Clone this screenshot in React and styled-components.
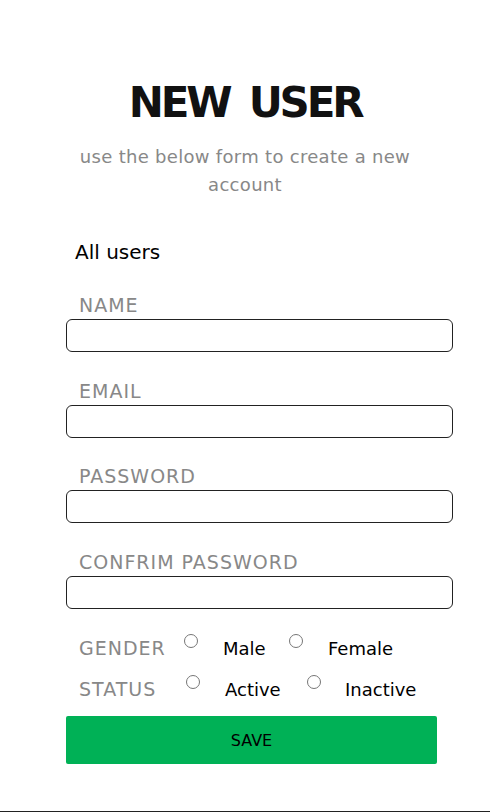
import React from "react";
import styled, { createGlobalStyle } from "styled-components";

const GlobalStyle = createGlobalStyle`
  body {
    margin: 0;
    font-family: "Comic Sans MS", "DejaVu Sans", sans-serif;
    background: #fff;
  }
`;

const Page = styled.div`
  height: 811px;
  border-bottom: 1px solid #222;
  box-sizing: content-box;
  display: flex;
  flex-direction: column;
  align-items: center;
`;

const Header = styled.div`
  padding-top: 77px;
  width: 100%;
  text-align: center;
`;

const Title = styled.h1`
  margin: 0;
  font-size: 42px;
  line-height: 52px;
  font-weight: bold;
  color: #111;
  letter-spacing: -3.2px;
  word-spacing: 8px;
`;

const Subtitle = styled.p`
  margin: 14px auto 0;
  width: 350px;
  font-size: 18px;
  line-height: 28px;
  letter-spacing: 0.3px;
  color: #888;
`;

const Form = styled.form`
  width: 387px;
  margin-left: 66px;
  align-self: flex-start;
  display: flex;
  flex-direction: column;
`;

const UsersLink = styled.div`
  margin-top: 41px;
  margin-left: 9px;
  font-size: 20px;
  line-height: 24px;
  color: #000;
`;

const Field = styled.div`
  margin-top: ${(p) => p.$top}px;
  display: flex;
  flex-direction: column;
  gap: 2px;
`;

const Label = styled.label`
  padding-left: 13px;
  font-size: 19px;
  line-height: 24px;
  letter-spacing: 1px;
  color: #888;
`;

const Input = styled.input`
  height: 33px;
  box-sizing: border-box;
  border: 1px solid #222;
  border-radius: 6px;
  outline: none;
`;

const ChoiceRow = styled.div`
  margin-top: ${(p) => p.$top}px;
  padding-left: 13px;
  display: flex;
  align-items: center;
  height: 24px;
  font-size: 18px;
`;

const RowLabel = styled.span`
  color: #888;
  font-size: 19px;
  letter-spacing: 1px;
  width: ${(p) => p.$w}px;
`;

const Radio = styled.input.attrs({ type: "radio" })`
  margin: 0;
  width: 14px;
  height: 14px;
  align-self: flex-start;
  margin-top: -2px;
`;

const Choice = styled.span`
  color: #000;
  margin-left: ${(p) => p.$ml}px;
  width: ${(p) => p.$w}px;
`;

const SaveButton = styled.button`
  margin-top: 15px;
  width: 371px;
  height: 48px;
  flex-shrink: 0;
  border: none;
  border-radius: 2px;
  background: #00b156;
  color: #000;
  font-family: inherit;
  font-size: 16px;
`;

export default function App() {
  return (
    <>
      <GlobalStyle />
      <Page>
        <Header>
          <Title>NEW USER</Title>
          <Subtitle>use the below form to create a new account</Subtitle>
        </Header>
        <Form onSubmit={(e) => e.preventDefault()}>
          <UsersLink>All users</UsersLink>
          <Field $top={29}>
            <Label>NAME</Label>
            <Input type="text" />
          </Field>
          <Field $top={27}>
            <Label>EMAIL</Label>
            <Input type="email" />
          </Field>
          <Field $top={26}>
            <Label>PASSWORD</Label>
            <Input type="password" />
          </Field>
          <Field $top={27}>
            <Label>CONFRIM PASSWORD</Label>
            <Input type="password" />
          </Field>
          <ChoiceRow $top={27}>
            <RowLabel $w={105}>GENDER</RowLabel>
            <Radio name="gender" />
            <Choice $ml={25} $w={66}>Male</Choice>
            <Radio name="gender" />
            <Choice $ml={25}>Female</Choice>
          </ChoiceRow>
          <ChoiceRow $top={17}>
            <RowLabel $w={107}>STATUS</RowLabel>
            <Radio name="status" />
            <Choice $ml={25} $w={82}>Active</Choice>
            <Radio name="status" />
            <Choice $ml={24}>Inactive</Choice>
          </ChoiceRow>
          <SaveButton type="submit">SAVE</SaveButton>
        </Form>
      </Page>
    </>
  );
}
